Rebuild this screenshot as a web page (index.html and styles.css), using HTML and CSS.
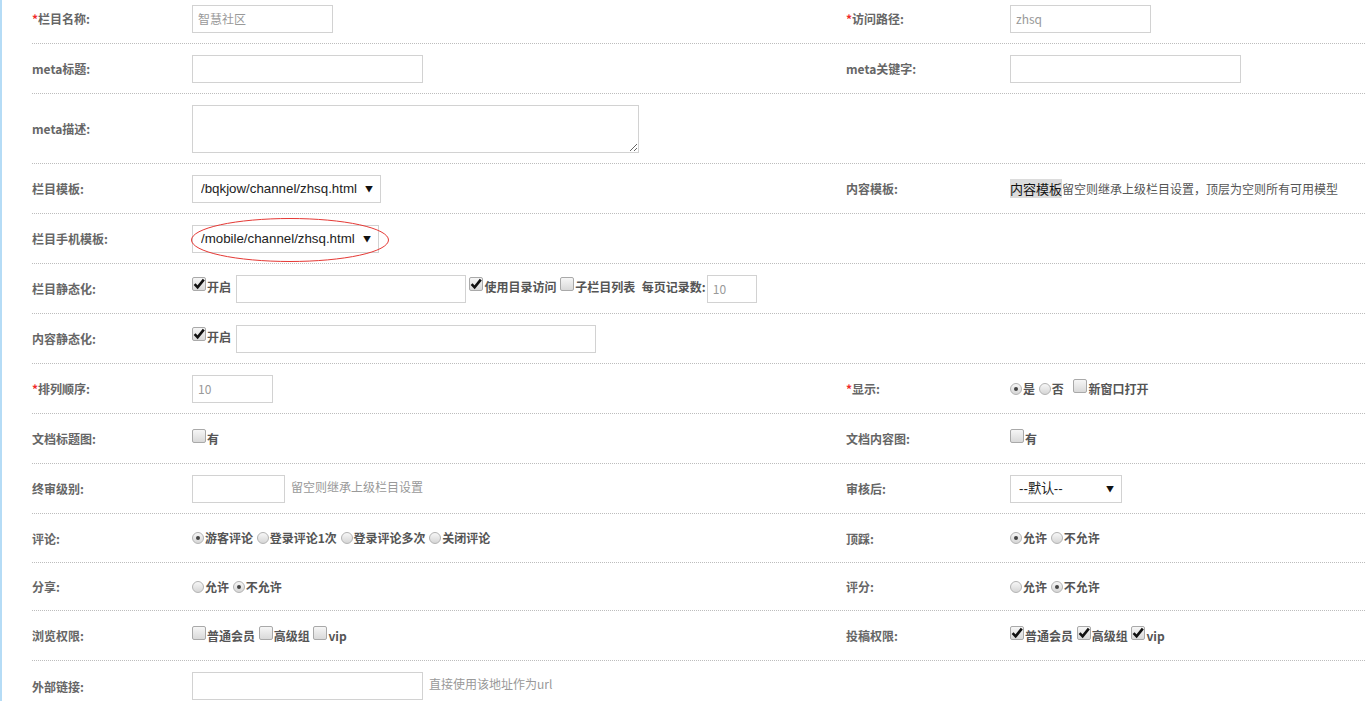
FILE: index.html
```html
<!DOCTYPE html>
<html lang="zh-CN">
<head>
    <meta charset="UTF-8" />
    <title>栏目设置</title>
    <link rel="stylesheet" href="styles.css">
</head>
<body>

<div class="form">

    <div class="row">
        <div class="label"><em>*</em>栏目名称:</div>
        <div class="field"><input class="txt w141" type="text" value="智慧社区"></div>
        <div class="label"><em>*</em>访问路径:</div>
        <div class="field"><input class="txt w141" type="text" value="zhsq"></div>
    </div>

    <div class="row">
        <div class="label">meta标题:</div>
        <div class="field"><input class="txt w231" type="text"></div>
        <div class="label">meta关键字:</div>
        <div class="field"><input class="txt w231" type="text"></div>
    </div>

    <div class="row tall">
        <div class="label">meta描述:</div>
        <div class="field"><textarea class="area"></textarea></div>
        <div class="label"></div>
        <div class="field"></div>
    </div>

    <div class="row">
        <div class="label">栏目模板:</div>
        <div class="field">
            <span class="sel w189"><select><option>/bqkjow/channel/zhsq.html</option></select></span>
        </div>
        <div class="label">内容模板:</div>
        <div class="field"><span class="note"><mark>内容模板</mark>留空则继承上级栏目设置，顶层为空则所有可用模型</span></div>
    </div>

    <div class="row">
        <div class="label">栏目手机模板:</div>
        <div class="field">
            <span class="sel w187"><select><option>/mobile/channel/zhsq.html</option></select>
                <svg class="circle" width="200" height="46" viewBox="0 0 200 46"><ellipse cx="100" cy="23" rx="98.5" ry="21.5" fill="none" stroke="#e53935" stroke-width="1"/></svg>
            </span>
        </div>
        <div class="label"></div>
        <div class="field"></div>
    </div>

    <div class="row">
        <div class="label">栏目静态化:</div>
        <div class="field">
            <div class="line">
                <label class="opt"><span class="cb on"><svg width="14" height="14" viewBox="0 0 14 14"><path d="M2.6 7.2 L5.6 10.3 L11.8 2.6" /></svg></span>开启</label>
                <input class="txt w230" type="text">
                <label class="opt"><span class="cb on"><svg width="14" height="14" viewBox="0 0 14 14"><path d="M2.6 7.2 L5.6 10.3 L11.8 2.6" /></svg></span>使用目录访问</label>
                <label class="opt"><span class="cb"></span>子栏目列表</label>
                <span class="opt gap">每页记录数:</span><input class="txt w50 tight" type="text" value="10">
            </div>
        </div>
        <div class="label"></div>
        <div class="field"></div>
    </div>

    <div class="row">
        <div class="label">内容静态化:</div>
        <div class="field">
            <div class="line">
                <label class="opt"><span class="cb on"><svg width="14" height="14" viewBox="0 0 14 14"><path d="M2.6 7.2 L5.6 10.3 L11.8 2.6" /></svg></span>开启</label>
                <input class="txt w360" type="text">
            </div>
        </div>
        <div class="label"></div>
        <div class="field"></div>
    </div>

    <div class="row">
        <div class="label"><em>*</em>排列顺序:</div>
        <div class="field"><input class="txt w81" type="text" value="10"></div>
        <div class="label"><em>*</em>显示:</div>
        <div class="field">
            <div class="line">
                <label class="opt"><span class="rd on"></span>是</label>
                <label class="opt"><span class="rd"></span>否</label>
                <label class="opt gap-lg"><span class="cb"></span>新窗口打开</label>
            </div>
        </div>
    </div>

    <div class="row">
        <div class="label">文档标题图:</div>
        <div class="field"><div class="line"><label class="opt"><span class="cb"></span>有</label></div></div>
        <div class="label">文档内容图:</div>
        <div class="field"><div class="line"><label class="opt"><span class="cb"></span>有</label></div></div>
    </div>

    <div class="row">
        <div class="label">终审级别:</div>
        <div class="field">
            <div class="line"><input class="txt w93" type="text"><span class="hint">留空则继承上级栏目设置</span></div>
        </div>
        <div class="label">审核后:</div>
        <div class="field">
            <span class="sel w112"><select><option>--默认--</option></select></span>
        </div>
    </div>

    <div class="row slim">
        <div class="label">评论:</div>
        <div class="field">
            <div class="line">
                <label class="opt"><span class="rd on"></span>游客评论</label>
                <label class="opt"><span class="rd"></span>登录评论1次</label>
                <label class="opt"><span class="rd"></span>登录评论多次</label>
                <label class="opt"><span class="rd"></span>关闭评论</label>
            </div>
        </div>
        <div class="label">顶踩:</div>
        <div class="field">
            <div class="line">
                <label class="opt"><span class="rd on"></span>允许</label>
                <label class="opt"><span class="rd"></span>不允许</label>
            </div>
        </div>
    </div>

    <div class="row slimmer">
        <div class="label">分享:</div>
        <div class="field">
            <div class="line">
                <label class="opt"><span class="rd"></span>允许</label>
                <label class="opt"><span class="rd on"></span>不允许</label>
            </div>
        </div>
        <div class="label">评分:</div>
        <div class="field">
            <div class="line">
                <label class="opt"><span class="rd"></span>允许</label>
                <label class="opt"><span class="rd on"></span>不允许</label>
            </div>
        </div>
    </div>

    <div class="row">
        <div class="label">浏览权限:</div>
        <div class="field">
            <div class="line">
                <label class="opt"><span class="cb"></span>普通会员</label>
                <label class="opt"><span class="cb"></span>高级组</label>
                <label class="opt"><span class="cb"></span>vip</label>
            </div>
        </div>
        <div class="label">投稿权限:</div>
        <div class="field">
            <div class="line">
                <label class="opt"><span class="cb on"><svg width="14" height="14" viewBox="0 0 14 14"><path d="M2.6 7.2 L5.6 10.3 L11.8 2.6" /></svg></span>普通会员</label>
                <label class="opt"><span class="cb on"><svg width="14" height="14" viewBox="0 0 14 14"><path d="M2.6 7.2 L5.6 10.3 L11.8 2.6" /></svg></span>高级组</label>
                <label class="opt"><span class="cb on"><svg width="14" height="14" viewBox="0 0 14 14"><path d="M2.6 7.2 L5.6 10.3 L11.8 2.6" /></svg></span>vip</label>
            </div>
        </div>
    </div>

    <div class="row last">
        <div class="label">外部链接:</div>
        <div class="field">
            <div class="line"><input class="txt w231" type="text"><span class="hint">直接使用该地址作为url</span></div>
        </div>
        <div class="label"></div>
        <div class="field"></div>
    </div>

</div>

</body>
</html>
```

FILE: styles.css
```css
* {
    box-sizing: border-box;
}
body {
    margin: 0;
    border-left: 2px solid #b5dcf6;
    min-height: 100vh;
    font-family: "Noto Sans CJK SC", "Liberation Sans", sans-serif;
    font-size: 12px;
    color: #555;
    background: #fff;
    overflow: hidden;
}
.form {
    margin: -6px 0 0 30px;
}
.row {
    display: grid;
    grid-template-columns: 160px 654px 164px 1fr;
    align-items: center;
    min-height: 50px;
    border-bottom: 1px dotted #bdbdbd;
}
.row.tall {
    min-height: 70px;
}
.row.slim {
    min-height: 49px;
}
.row.slimmer {
    min-height: 48px;
}
.row.last {
    border-bottom: none;
}
.label {
    font-weight: bold;
    color: #666;
    white-space: nowrap;
}
.label em {
    font-style: normal;
    color: #f02b2b;
}
.field {
    display: flex;
    align-items: center;
    white-space: nowrap;
}
.line {
    line-height: 20px;
}
.line > * + * {
    margin-left: 1px;
}

.txt {
    height: 28px;
    border: 1px solid #d2d2d2;
    padding: 0 5px;
    font-family: "Noto Sans CJK SC", "Liberation Sans", sans-serif;
    font-size: 12px;
    color: #999;
    outline: none;
    vertical-align: middle;
    margin: 0;
}
.line > .txt {
    margin-left: 2px;
}
.line > .txt:first-child {
    margin-left: 0;
}
.line > .txt.tight {
    margin-left: 1px;
}
.w50 { width: 50px; }
.w81 { width: 81px; }
.w93 { width: 93px; }
.w141 { width: 141px; }
.w230 { width: 230px; }
.w231 { width: 231px; }
.w360 { width: 360px; }

.area {
    display: block;
    width: 447px;
    height: 48px;
    border: 1px solid #d2d2d2;
    margin: 0;
}

.sel {
    position: relative;
    display: inline-block;
    height: 28px;
}
.sel select {
    appearance: none;
    -webkit-appearance: none;
    width: 100%;
    height: 28px;
    border: 1px solid #d2d2d2;
    border-radius: 0;
    background: #fff;
    padding: 0 0 0 8px;
    font-family: "Liberation Sans", Arial, sans-serif;
    font-size: 13.3px;
    color: #222;
    outline: none;
}
.sel::after {
    content: "▼";
    position: absolute;
    right: 8px;
    top: 8px;
    font-size: 8px;
    color: #111;
    pointer-events: none;
}
.w112 { width: 112px; }
.w187 { width: 187px; }
.w189 { width: 189px; }
.sel .circle {
    position: absolute;
    left: -2px;
    top: -8px;
    pointer-events: none;
}

.note {
    color: #555;
    font-size: 12px;
}
.note mark {
    background: #dcdcdc;
    color: #111;
    font-size: 13px;
}

.hint {
    color: #999;
    margin-left: 6px;
}

.opt {
    font-weight: bold;
    color: #555;
}
.line > .gap {
    margin-left: 4px;
}
.line > .gap-lg {
    margin-left: 7px;
}
.cb {
    display: inline-block;
    width: 14px;
    height: 14px;
    border: 1px solid #a9a9a9;
    border-radius: 2px;
    background: linear-gradient(#f6f6f6, #d9d9d9);
    vertical-align: 1px;
    margin-right: 1px;
    position: relative;
}
.cb svg {
    position: absolute;
    left: -1px;
    top: -1px;
}
.cb svg path {
    fill: none;
    stroke: #111;
    stroke-width: 2.6;
}
.rd {
    display: inline-block;
    width: 12px;
    height: 12px;
    border: 1px solid #b3b3b3;
    border-radius: 50%;
    background: linear-gradient(#f7f7f7, #d6d6d6);
    vertical-align: -1px;
    margin-right: 1px;
    position: relative;
}
.rd.on::after {
    content: "";
    position: absolute;
    left: 3px;
    top: 3px;
    width: 4px;
    height: 4px;
    border-radius: 50%;
    background: #444;
}
```
